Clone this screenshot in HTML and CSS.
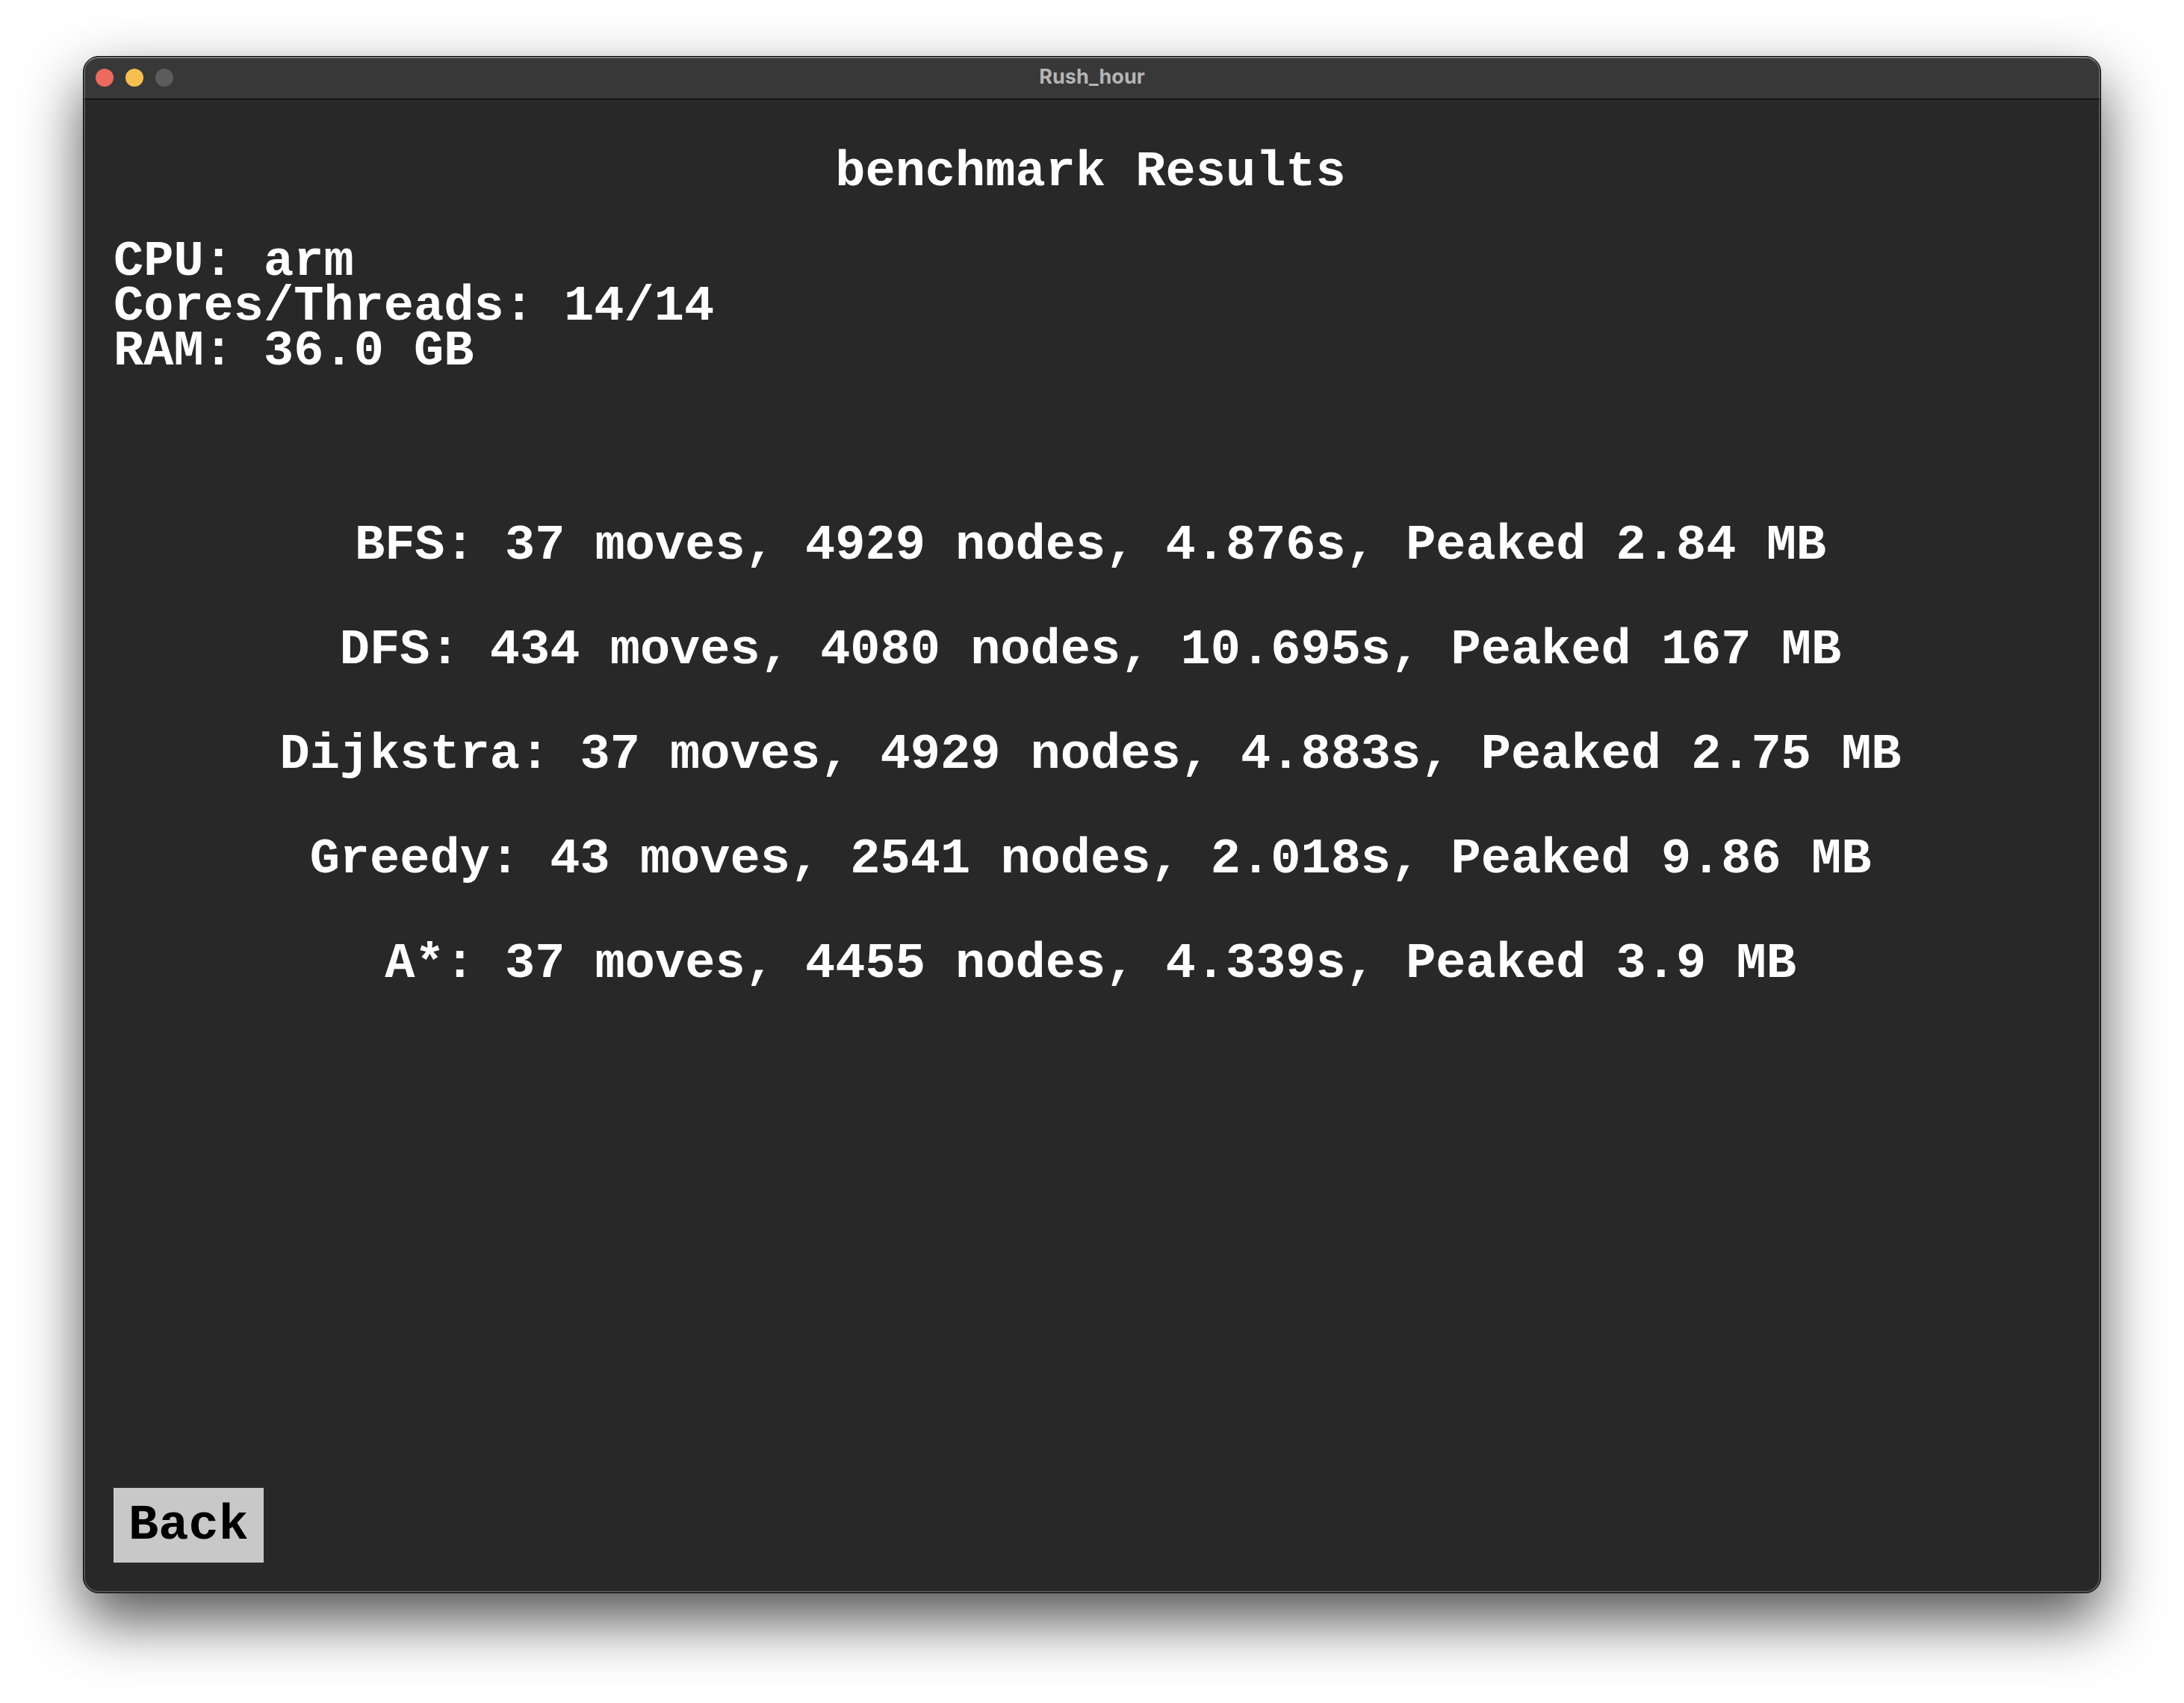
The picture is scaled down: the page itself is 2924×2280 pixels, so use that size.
FILE: index.html
```html
<!DOCTYPE html>
<html lang="en">
<head>
<meta charset="utf-8">
<title>Rush_hour</title>
<link rel="stylesheet" href="styles.css">
</head>
<body>
<div class="window">
  <header class="titlebar">
    <div class="controls">
      <button class="control close" type="button" aria-label="Close"></button>
      <button class="control minimize" type="button" aria-label="Minimize"></button>
      <button class="control zoom" type="button" aria-label="Zoom" disabled></button>
    </div>
    <div class="title">Rush_hour</div>
  </header>
  <main class="screen">
    <h1 class="heading">benchmark Results</h1>
    <section class="specs">
      <p class="line">CPU: arm</p>
      <p class="line">Cores/Threads: 14/14</p>
      <p class="line">RAM: 36.0 GB</p>
    </section>
    <ul class="results">
      <li class="line">BFS: 37 moves, 4929 nodes, 4.876s, Peaked 2.84 MB</li>
      <li class="line">DFS: 434 moves, 4080 nodes, 10.695s, Peaked 167 MB</li>
      <li class="line">Dijkstra: 37 moves, 4929 nodes, 4.883s, Peaked 2.75 MB</li>
      <li class="line">Greedy: 43 moves, 2541 nodes, 2.018s, Peaked 9.86 MB</li>
      <li class="line">A*: 37 moves, 4455 nodes, 4.339s, Peaked 3.9 MB</li>
    </ul>
    <button class="back" type="button">Back</button>
  </main>
</div>
</body>
</html>
```
FILE: styles.css
```css
* {
  box-sizing: border-box;
  margin: 0;
  padding: 0;
}

body {
  display: flex;
  min-height: 100vh;
  padding: 75px 111px 147px;
  background: #fff;
}

.window {
  position: relative;
  display: flex;
  flex: 1;
  flex-direction: column;
  border: 1px solid #000;
  border-radius: 21px;
  overflow: hidden;
  background: #282828;
  box-shadow: 0 36px 80px rgba(0, 0, 0, 0.68);
}

/* Light rim just inside the window edge */
.window::after {
  content: "";
  position: absolute;
  inset: 0;
  border: 2px solid rgba(255, 255, 255, 0.2);
  border-top-color: rgba(255, 255, 255, 0.32);
  border-radius: 20px;
  pointer-events: none;
}

.titlebar {
  display: grid;
  grid-template-columns: 1fr auto 1fr;
  align-items: center;
  height: 57px;
  padding: 0 16px;
  border-bottom: 1px solid #000;
  background: #383838;
}

.controls {
  display: flex;
  gap: 16px;
}

.control {
  width: 24px;
  height: 24px;
  border: 0;
  border-radius: 50%;
}

.close {
  background: #ed6a5e;
}

.minimize {
  background: #f5bf4f;
}

.zoom {
  background: #5c5c5c;
}

.title {
  padding-bottom: 2px;
  color: #b4b4b4;
  font: bold 27px/32px Inter, sans-serif;
}

.screen {
  display: flex;
  flex: 1;
  flex-direction: column;
  padding: 67px 44px 40px 40px;
  color: #fff;
}

.heading,
.line,
.back {
  font: bold 67px/60px "Liberation Mono", monospace;
}

.heading {
  text-align: center;
}

.specs {
  margin-top: 60px;
}

.results {
  display: flex;
  flex-direction: column;
  gap: 80px;
  margin-top: 200px;
  list-style: none;
  text-align: center;
}

.back {
  align-self: flex-start;
  margin-top: auto;
  padding: 20px;
  border: 0;
  background: #c8c8c8;
  color: #000;
}
```
